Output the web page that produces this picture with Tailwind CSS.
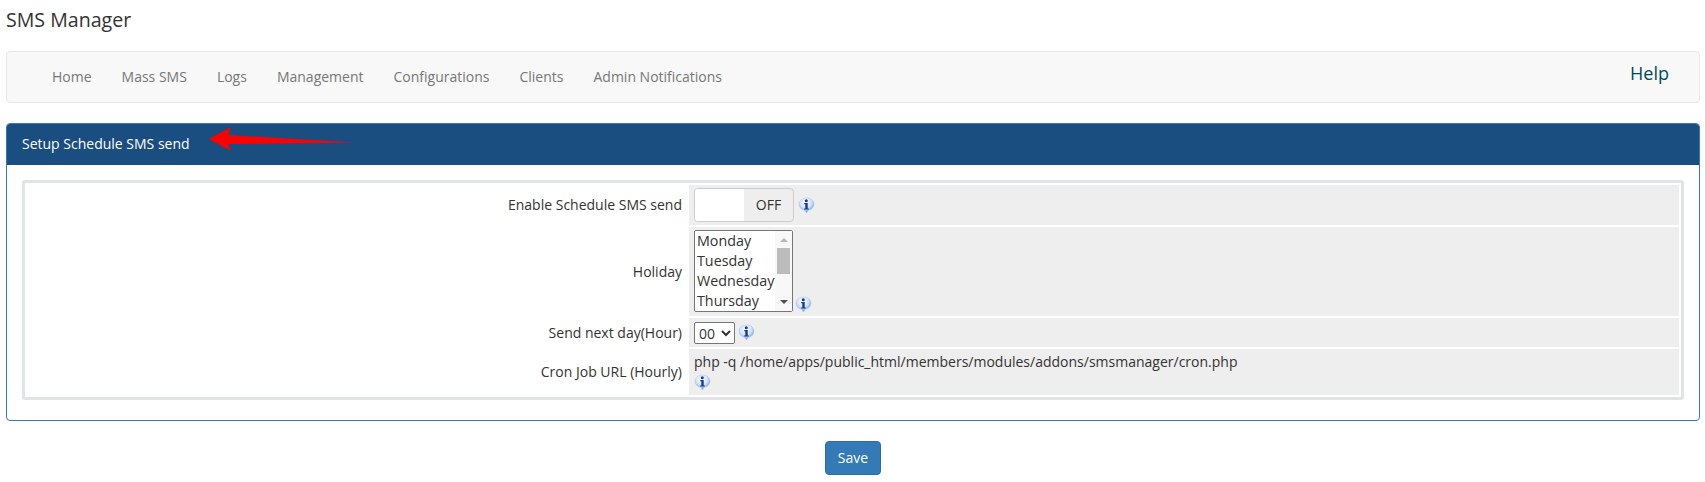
<!DOCTYPE html>
<html lang="en">
<head>
  <meta charset="UTF-8" />
  <title>SMS Manager</title>
  <script src="https://cdn.jsdelivr.net/npm/@tailwindcss/browser@4"></script>
</head>
<body class="bg-white text-[#333] font-['Open_Sans',sans-serif] text-[14px] leading-[20px] h-[482px] overflow-hidden">
  <!-- shared info icon, zero sized because a display:none svg loses its gradient -->
  <svg class="absolute w-0 h-0">
    <defs>
      <radialGradient id="bubble" cx="45%" cy="30%" r="75%">
        <stop offset="0" stop-color="#ffffff" />
        <stop offset="0.5" stop-color="#d3e3f8" />
        <stop offset="1" stop-color="#4f86d8" />
      </radialGradient>
      <symbol id="info" viewBox="0 0 17 17">
        <path d="M8.500 1C4.300 1 1 3.700 1 7.200c0 3 2.400 5.400 5.500 6L8.500 16l2-2.800c3.100-.6 5.500-3 5.500-6C16 3.700 12.700 1 8.500 1z" fill="url(#bubble)" stroke="#a8c4ec" stroke-width=".5" />
        <circle cx="8.300" cy="3.700" r="1.500" fill="#17389a" />
        <path d="M6.200 6.100h3.500v5.300h1.100v1.200H6.100v-1.200h1.200V7.300H6.200z" fill="#17389a" />
      </symbol>
    </defs>
  </svg>

  <div class="pl-[6px] pr-[5px]">
    <h1 class="text-[19.6px] leading-[20px] font-normal pt-[10px] h-[51px]">SMS Manager</h1>

    <nav class="h-[52px] bg-[#f8f8f8] border border-[#e7e7e7] rounded-[4px] flex items-center justify-between pl-[30px] pr-[30px] text-[#777]">
      <ul class="flex">
        <li class="px-[15px]">Home</li>
        <li class="px-[15px]">Mass SMS</li>
        <li class="px-[15px]">Logs</li>
        <li class="px-[15px]">Management</li>
        <li class="px-[15px]">Configurations</li>
        <li class="px-[15px]">Clients</li>
        <li class="px-[15px]">Admin Notifications</li>
      </ul>
      <a class="text-[18px] text-[#004a5f] mb-[8px]">Help</a>
    </nav>

    <section class="relative mt-[20px] h-[298px] border border-[#337ab7] rounded-[4px]">
      <div class="h-[41px] bg-[#1a4d80] text-white flex items-center pl-[15px] pb-[1px] rounded-t-[3px]">Setup Schedule SMS send</div>
      <svg class="absolute left-[200px] top-0 w-[150px] h-[40px]" viewBox="0 0 150 40">
        <path d="M2 15 L24 3 L21 11 L148 18.500 L21 20 L24 27 Z" fill="#f00" />
      </svg>

      <div class="mt-[15px] ml-[15px] mr-[15px] border-[3px] border-[#e1e4e6] rounded-[3px] p-[2px] flex flex-col gap-[2px] h-[220px]">
        <div class="flex gap-[2px] h-[40px]">
          <div class="w-[660px] flex items-center justify-end pr-[5px]">Enable Schedule SMS send</div>
          <div class="flex-1 bg-[#eeeeee] flex items-center pl-[5px]">
            <div class="w-[100px] h-[34px] border border-[#ccc] rounded-[4px] flex overflow-hidden">
              <span class="w-[49px] bg-white"></span>
              <span class="flex-1 flex items-center justify-center">OFF</span>
            </div>
            <svg class="w-[17px] h-[17px] ml-[4px]"><use href="#info" /></svg>
          </div>
        </div>
        <div class="flex gap-[2px] h-[89px]">
          <div class="w-[660px] flex items-center justify-end pr-[5px]">Holiday</div>
          <div class="flex-1 bg-[#eeeeee] flex items-end pl-[5px] pb-[3px]">
            <div class="relative w-[99px] h-[82px] mb-[1px]">
              <select multiple size="4" class="w-full h-full bg-white border border-[#767676] rounded-[2px] text-[14.3px] leading-[20px] overflow-hidden block">
                <option class="px-[2px] pb-[2px] h-[20px]">Monday</option>
                <option class="px-[2px] pb-[2px] h-[20px]">Tuesday</option>
                <option class="px-[2px] pb-[2px] h-[20px]">Wednesday</option>
                <option class="px-[2px] pb-[2px] h-[20px]">Thursday</option>
                <option class="px-[2px] pb-[2px] h-[20px]">Friday</option>
                <option class="px-[2px] pb-[2px] h-[20px]">Saturday</option>
                <option class="px-[2px] pb-[2px] h-[20px]">Sunday</option>
              </select>
              <div class="absolute right-[1px] top-[1px] bottom-[1px] w-[17px] bg-[#f8f8f8] flex flex-col items-center justify-between py-[7px]">
                <svg class="w-[8px] h-[4px]" viewBox="0 0 8 4"><path d="M4 0 8 4H0z" fill="#b4b4b4" /></svg>
                <svg class="w-[8px] h-[4px]" viewBox="0 0 8 4"><path d="M0 0h8L4 4z" fill="#505050" /></svg>
                <span class="absolute left-[2px] top-[17px] w-[13px] h-[26px] bg-[#bcbcbc]"></span>
              </div>
            </div>
            <svg class="w-[17px] h-[17px] ml-[2px]"><use href="#info" /></svg>
          </div>
        </div>
        <div class="flex gap-[2px] h-[29px]">
          <div class="w-[660px] flex items-center justify-end pr-[5px]">Send next day(Hour)</div>
          <div class="flex-1 bg-[#eeeeee] flex items-center pl-[5px]">
            <select class="w-[41px] h-[22px] bg-white border border-[#767676] rounded-[2px] text-[14px] pl-0 appearance-auto">
              <option>00</option>
            </select>
            <svg class="w-[17px] h-[17px] ml-[3px]"><use href="#info" /></svg>
          </div>
        </div>
        <div class="flex gap-[2px] h-[46px]">
          <div class="w-[660px] flex items-center justify-end pr-[5px]">Cron Job URL (Hourly)</div>
          <div class="flex-1 bg-[#eeeeee] pl-[5px] pt-[3px]">
            <div>php -q /home/apps/public_html/members/modules/addons/smsmanager/cron.php</div>
            <svg class="w-[17px] h-[17px] mt-[2px]"><use href="#info" /></svg>
          </div>
        </div>
      </div>
    </section>

    <div class="flex justify-center mt-[20px]">
      <button class="w-[56px] h-[34px] bg-[#337ab7] border border-[#2e6da4] rounded-[4px] text-white">Save</button>
    </div>
  </div>
</body>
</html>
